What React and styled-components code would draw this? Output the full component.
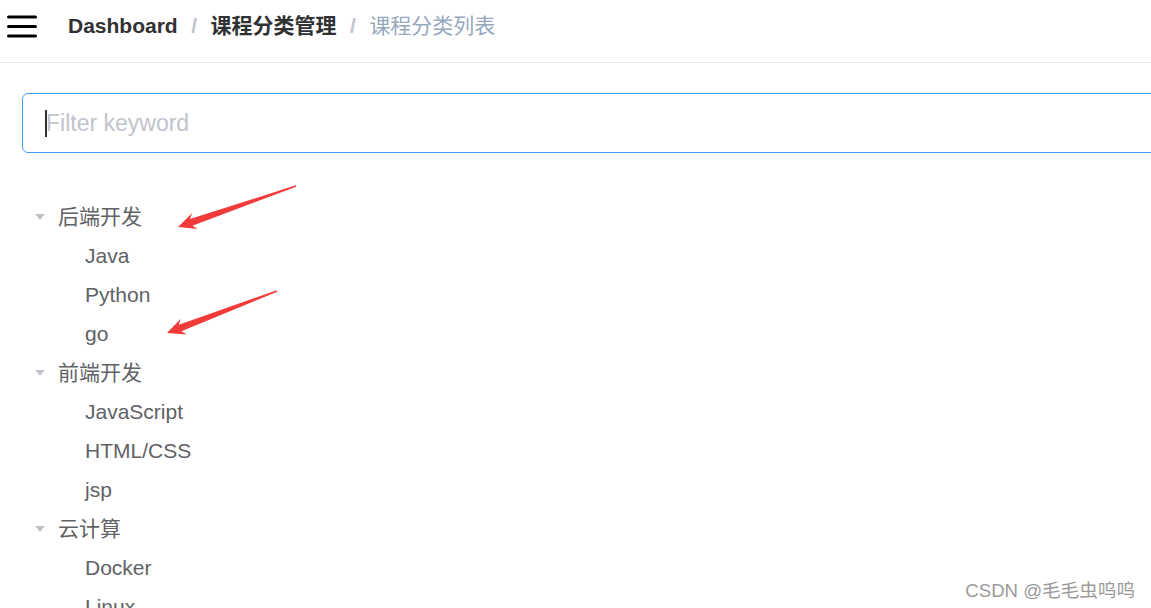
import React from "react";
import styled, { createGlobalStyle } from "styled-components";

const GlobalStyle = createGlobalStyle`
  html, body {
    margin: 0;
    padding: 0;
    width: 1151px;
    height: 608px;
    overflow: hidden;
    background: #fff;
    font-family: "Liberation Sans", "Noto Sans CJK SC", sans-serif;
  }
`;

const Page = styled.div`
  position: relative;
  width: 1151px;
  height: 608px;
  overflow: hidden;
`;

const Navbar = styled.div`
  display: flex;
  align-items: center;
  height: 63px;
  box-sizing: border-box;
  padding-bottom: 11px;
  border-bottom: 1px solid #e6e6e6;
`;

const Hamburger = styled.div`
  display: flex;
  align-items: center;
  padding-left: 7px;
  width: 61px;
`;

const Breadcrumb = styled.div`
  display: flex;
  align-items: center;
  font-size: 21px;
  line-height: 30px;
`;

const Crumb = styled.span`
  font-weight: ${(p) => (p.$last ? 400 : 700)};
  color: ${(p) => (p.$last ? "#97a8be" : "#303133")};
`;

const Sep = styled.span`
  margin: 0 13.5px;
  color: #c0c4cc;
  font-weight: 700;
`;

const Container = styled.div`
  padding: 30px 0 0 22px;
`;

const InputWrap = styled.div`
  position: relative;
  width: 1200px;
  height: 60px;
`;

const Input = styled.input`
  box-sizing: border-box;
  width: 100%;
  height: 60px;
  border: 1px solid #409eff;
  border-radius: 6px;
  outline: none;
  padding: 0 0 0 23px;
  font-family: "Liberation Sans", "Noto Sans CJK SC", sans-serif;
  font-size: 23px;
  color: #606266;
  &::placeholder {
    color: #c0c4cc;
  }
`;

const Caret = styled.span`
  position: absolute;
  left: 23px;
  top: 17px;
  width: 2px;
  height: 27px;
  background: #303133;
`;

const Tree = styled.div`
  margin-top: 44px;
`;

const Node = styled.div`
  display: flex;
  align-items: center;
  height: 39px;
  padding-left: ${(p) => p.$level * 27}px;
  font-size: 21px;
  color: #606266;
`;

const Expand = styled.span`
  display: flex;
  align-items: center;
  justify-content: center;
  width: 18px;
  height: 18px;
  padding: 0 9px;
  &::before {
    content: "";
    display: ${(p) => (p.$leaf ? "none" : "block")};
    border-left: 5px solid transparent;
    border-right: 5px solid transparent;
    border-top: 6px solid #c0c4cc;
  }
`;

const Label = styled.span`
  line-height: 39px;
  white-space: nowrap;
`;

const Overlay = styled.svg`
  position: absolute;
  left: 0;
  top: 0;
  pointer-events: none;
`;

const Watermark = styled.div`
  position: absolute;
  right: 16px;
  bottom: 6px;
  font-size: 18.6px;
  color: #9a9a9a;
  text-shadow: 0 0 1px #fff;
`;

const tree = [
  { label: "后端开发", children: ["Java", "Python", "go"] },
  { label: "前端开发", children: ["JavaScript", "HTML/CSS", "jsp"] },
  { label: "云计算", children: ["Docker", "Linux"] },
];

function arrowPoints(tip, tail) {
  const dx = tail[0] - tip[0];
  const dy = tail[1] - tip[1];
  const len = Math.hypot(dx, dy);
  const u = [dx / len, dy / len];
  const n = [-u[1], u[0]];
  const at = (along, side) => [
    tip[0] + u[0] * along + n[0] * side,
    tip[1] + u[1] * along + n[1] * side,
  ];
  const pts = [
    tip,
    at(18, 8.5),
    at(14, 3.6),
    [tail[0] + n[0] * 0.7, tail[1] + n[1] * 0.7],
    [tail[0] - n[0] * 0.7, tail[1] - n[1] * 0.7],
    at(14, -3.6),
    at(18, -8.5),
  ];
  return pts.map((p) => p.join(",")).join(" ");
}

function Arrow({ tip, tail }) {
  return <polygon points={arrowPoints(tip, tail)} fill="#f23a3a" />;
}

export default function App() {
  return (
    <Page>
      <GlobalStyle />
      <Navbar>
        <Hamburger>
          <svg width="30" height="24" viewBox="0 0 30 24">
            <g stroke="#000" strokeWidth="3" strokeLinecap="round">
              <line x1="1.5" y1="3" x2="28.5" y2="3" />
              <line x1="1.5" y1="12.5" x2="28.5" y2="12.5" />
              <line x1="1.5" y1="22" x2="28.5" y2="22" />
            </g>
          </svg>
        </Hamburger>
        <Breadcrumb>
          <Crumb>Dashboard</Crumb>
          <Sep>/</Sep>
          <Crumb>课程分类管理</Crumb>
          <Sep>/</Sep>
          <Crumb $last>课程分类列表</Crumb>
        </Breadcrumb>
      </Navbar>
      <Container>
        <InputWrap>
          <Input placeholder="Filter keyword" />
          <Caret />
        </InputWrap>
        <Tree>
          {tree.map((group) => (
            <React.Fragment key={group.label}>
              <Node $level={0}>
                <Expand />
                <Label>{group.label}</Label>
              </Node>
              {group.children.map((c) => (
                <Node key={c} $level={1}>
                  <Expand $leaf />
                  <Label>{c}</Label>
                </Node>
              ))}
            </React.Fragment>
          ))}
        </Tree>
      </Container>
      <Overlay width="1151" height="608">
        <Arrow tip={[178, 227]} tail={[296, 186]} />
        <Arrow tip={[167, 333]} tail={[277, 291]} />
      </Overlay>
      <Watermark>CSDN @毛毛虫呜呜</Watermark>
    </Page>
  );
}
